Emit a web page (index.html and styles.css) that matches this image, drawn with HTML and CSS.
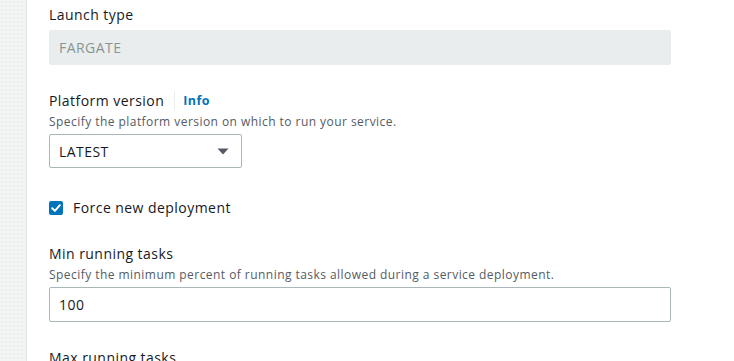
FILE: index.html
```html
<!DOCTYPE html>
<html>
<head>
<meta charset="utf-8">
<link rel="stylesheet" href="styles.css">
</head>
<body>
<div class="page">
  <div class="rail"></div>
  <main class="form">
    <div class="field">
      <div class="label">Launch type</div>
      <div class="input disabled">FARGATE</div>
    </div>
    <div class="field">
      <div class="label">Platform version <span class="sep"></span><a class="info">Info</a></div>
      <div class="desc">Specify the platform version on which to run your service.</div>
      <div class="select">
        <span>LATEST</span>
        <svg class="caret" width="12" height="7" viewBox="0 0 12 7"><path d="M0.5 0.5 H11.5 L6 6.5 Z" fill="#545b64"/></svg>
      </div>
    </div>
    <div class="check-row">
      <span class="checkbox"><svg width="14" height="14" viewBox="0 0 14 14"><path d="M3.2 7.2 L5.9 9.9 L10.9 4.2" fill="none" stroke="#fff" stroke-width="2" stroke-linecap="round" stroke-linejoin="round"/></svg></span>
      <span class="check-label">Force new deployment</span>
    </div>
    <div class="field">
      <div class="label">Min running tasks</div>
      <div class="desc">Specify the minimum percent of running tasks allowed during a service deployment.</div>
      <div class="input">100</div>
    </div>
    <div class="field">
      <div class="label">Max running tasks</div>
    </div>
  </main>
</div>
</body>
</html>
```
FILE: styles.css
```css
html, body {
  margin: 0;
  padding: 0;
  background: #ffffff;
  height: 100%;
  overflow: hidden;
}
body {
  font-family: "Open Sans", "Liberation Sans", sans-serif;
  color: #16191f;
  letter-spacing: 0.45px;
}
.page {
  display: flex;
  height: 361px;
}
.rail {
  width: 26px;
  flex: none;
  background-color: #f3f4f4;
  background-image: radial-gradient(circle, #e6e8e8 0.6px, transparent 0.9px);
  background-size: 4px 4px;
  border-right: 1px solid #e4e6e6;
}
.form {
  padding: 4px 0 0 22px;
  width: 622px;
  display: flex;
  flex-direction: column;
}
.field {
  display: flex;
  flex-direction: column;
}
.label {
  font-size: 14px;
  line-height: 22px;
  display: flex;
  align-items: center;
  margin-bottom: 4px;
}
.sep {
  display: inline-block;
  width: 1px;
  height: 20px;
  background: #eaeded;
  margin: 0 8px 0 10px;
}
.info {
  color: #0073bb;
  font-weight: 700;
  font-size: 12.5px;
}
.desc {
  font-size: 12px;
  line-height: 16px;
  color: #545b64;
  margin-top: -2px;
  margin-bottom: 4px;
}
.input {
  box-sizing: border-box;
  height: 35px;
  border: 1px solid #aab7b8;
  border-radius: 2px;
  padding: 0 9px;
  font-size: 14px;
  display: flex;
  align-items: center;
}
.input.disabled {
  background: #eaeded;
  border-color: #eaeded;
  color: #879596;
}
.field + .field { margin-top: 25px; }
.select {
  box-sizing: border-box;
  width: 193px;
  height: 34px;
  border: 1px solid #aab7b8;
  border-radius: 2px;
  padding: 0 12px 0 9px;
  font-size: 14px;
  display: flex;
  align-items: center;
  justify-content: space-between;
}
.check-row {
  display: flex;
  align-items: center;
  margin-top: 29px;
  margin-bottom: 24px;
}
.checkbox {
  width: 14px;
  height: 14px;
  background: #0073bb;
  border-radius: 2px;
  display: inline-flex;
  margin-right: 10px;
}
.check-label {
  font-size: 14px;
  line-height: 22px;
}
.check-row + .field { margin-top: 0; }
```
